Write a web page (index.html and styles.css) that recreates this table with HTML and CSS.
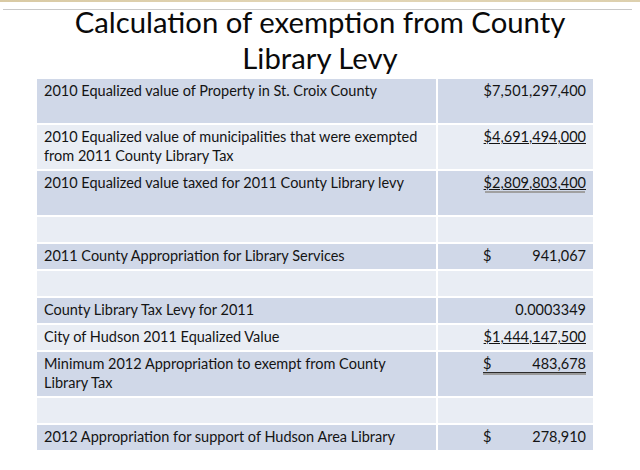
FILE: index.html
```html
<!DOCTYPE html>
<html>
<head>
<meta charset="utf-8">
<link rel="stylesheet" href="styles.css">
</head>
<body>
<div class="topstrip"></div>
<div class="rule"></div>
<h1 class="title">Calculation of exemption from County<br>Library Levy</h1>
<div class="table">
  <div class="cell label dark tall">2010 Equalized value of Property in St. Croix County</div>
  <div class="cell value dark tall"><span class="num">$7,501,297,400</span></div>

  <div class="cell label light tall">2010 Equalized value of municipalities that were exempted<br>from 2011 County Library Tax</div>
  <div class="cell value light tall"><span class="num ul">$4,691,494,000</span></div>

  <div class="cell label dark tall">2010 Equalized value taxed for 2011 County Library levy</div>
  <div class="cell value dark tall"><span class="num ul dbl">$2,809,803,400</span></div>

  <div class="cell label light"></div>
  <div class="cell value light"></div>

  <div class="cell label dark">2011 County Appropriation for Library Services</div>
  <div class="cell value dark acct"><span>$</span><span>941,067</span></div>

  <div class="cell label light"></div>
  <div class="cell value light"></div>

  <div class="cell label dark">County Library Tax Levy for 2011</div>
  <div class="cell value dark"><span class="num">0.0003349</span></div>

  <div class="cell label light">City of Hudson 2011 Equalized Value</div>
  <div class="cell value light"><span class="num ul">$1,444,147,500</span></div>

  <div class="cell label dark tall">Minimum 2012 Appropriation to exempt from County<br>Library Tax</div>
  <div class="cell value dark tall acct"><span class="acctline"><span>$</span><span>483,678</span></span></div>

  <div class="cell label light"></div>
  <div class="cell value light"></div>

  <div class="cell label dark">2012 Appropriation for support of Hudson Area Library</div>
  <div class="cell value dark acct"><span>$</span><span>278,910</span></div>
</div>
</body>
</html>
```

FILE: styles.css
```css
html, body {
  margin: 0;
  padding: 0;
  background: #ffffff;
}
body {
  width: 640px;
  height: 470px;
  overflow: hidden;
  font-family: "Lato", "Liberation Sans", sans-serif;
  color: #141414;
}
.topstrip {
  height: 2px;
  background: linear-gradient(to right, #d9caa4, #e3d6b6 50%, #ddd0ae);
}
.rule {
  height: 1px;
  margin: 7px 8px 0 3px;
  background: #c9c9c9;
}
.title {
  margin: -6px 0 0 0;
  font-weight: 400;
  font-size: 29.3px;
  line-height: 36px;
  text-align: center;
  color: #0a0a0a;
}
.table {
  display: grid;
  grid-template-columns: 399px 155px;
  column-gap: 2px;
  row-gap: 2px;
  margin: 3px 0 0 37px;
  width: 556px;
}
.cell {
  box-sizing: border-box;
  height: 25px;
  padding: 2px 7px 4px 7px;
  font-size: 14.5px;
  line-height: 19px;
  white-space: nowrap;
}
.cell.tall {
  height: 44px;
}
.dark { background: #d0d8e8; }
.light { background: #e9edf4; }
.value {
  text-align: right;
}
.value.acct {
  display: flex;
  justify-content: space-between;
  padding-left: 45px;
}
.acctline {
  display: flex;
  justify-content: space-between;
  width: 100%;
  height: 18px;
  border-bottom: 1px solid #2a2a2a;
  box-shadow: 0 2px 0 #9a9a9a;
}
.num.ul {
  text-decoration: underline;
  text-decoration-thickness: 1px;
  text-underline-offset: 1px;
}
.num.dbl {
  box-shadow: 0 3px 0 -1px #a0a0a0;
}
```
